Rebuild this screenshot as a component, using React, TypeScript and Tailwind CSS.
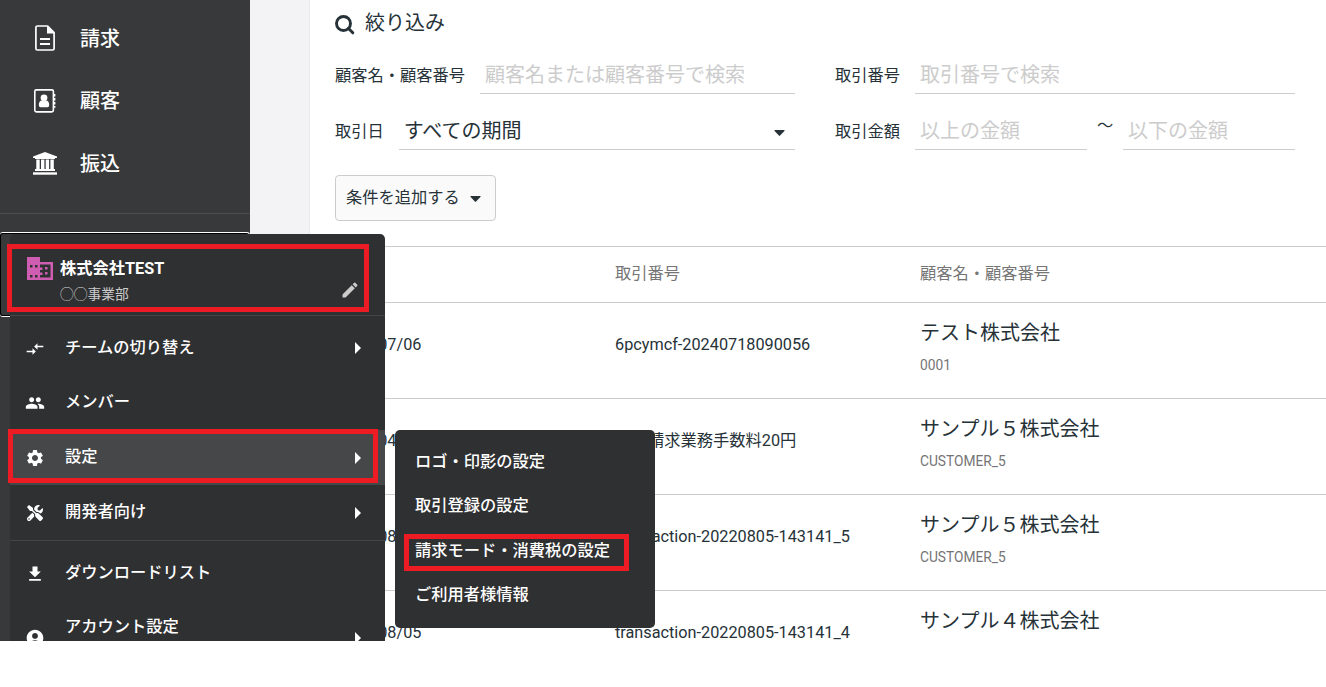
import type { ReactNode } from "react"
import { FaTools } from "react-icons/fa"
import { MdAccountCircle, MdCompareArrows, MdEdit, MdFileDownload, MdPeople, MdSettings } from "react-icons/md"

interface MenuItem {
    label: string
    icon: ReactNode
    hasChildren?: boolean
    active?: boolean
}

interface Transaction {
    date: string
    number: string
    indent?: boolean
    customer: string
    code: string
}

const menuItems: MenuItem[] = [
    { label: "チームの切り替え", icon: <MdCompareArrows className="size-[20px]" />, hasChildren: true },
    { label: "メンバー", icon: <MdPeople className="size-[20px]" /> },
    { label: "設定", icon: <MdSettings className="size-[20px]" />, hasChildren: true, active: true },
    { label: "開発者向け", icon: <FaTools className="size-[16px]" />, hasChildren: true },
]

const submenuItems = ["ロゴ・印影の設定", "取引登録の設定", "請求モード・消費税の設定", "ご利用者様情報"]

const transactions: Transaction[] = [
    { date: "2024/07/06", number: "6pcymcf-20240718090056", customer: "テスト株式会社", code: "0001" },
    { date: "2022/04", number: "請求業務手数料20円", indent: true, customer: "サンプル５株式会社", code: "CUSTOMER_5" },
    { date: "2022/08", number: "transaction-20220805-143141_5", customer: "サンプル５株式会社", code: "CUSTOMER_5" },
    { date: "2022/08/05", number: "transaction-20220805-143141_4", customer: "サンプル４株式会社", code: "" },
]

function DocumentIcon() {
    return (
        <svg viewBox="0 0 20 26" className="h-[26px] w-[20px]" fill="none" stroke="currentColor" strokeWidth="1.7">
            <path d="M12.6 1H2.4Q.9 1 .9 2.5v21q0 1.500 1.500 1.500h15.200q1.500 0 1.500-1.500V7.600Z" strokeLinejoin="round" />
            <path d="M12 1v7.500h7.300Z" fill="currentColor" stroke="none" />
            <path d="M5 13.900h10M5 19h10" strokeWidth="2" />
        </svg>
    )
}

function AddressBookIcon() {
    return (
        <svg viewBox="0 0 22 24" className="h-[24px] w-[22px]" fill="currentColor">
            <rect x=".8" y=".9" width="18.600" height="22" rx="1.600" fill="none" stroke="currentColor" strokeWidth="1.600" />
            <circle cx="10" cy="8.800" r="3.400" />
            <path d="M4.800 16.200q0-4.700 3.200-4.700 2 1.400 4 0 3.200 0 3.200 4.700 0 2-1.800 2H6.600q-1.800 0-1.800-2Z" />
            <path d="M19.400 5h2v2.600h-2zM19.400 9h2v2.600h-2zM19.400 13h2v2.600h-2zM19.400 17h2v1.800h-2z" />
        </svg>
    )
}

function BankIcon() {
    return (
        <svg viewBox="0 0 24 23" className="h-[23px] w-[24px]" fill="currentColor">
            <path d="M12 0 24 4.600V6h-2v1H2V6H0V4.600Z" />
            <path d="M3.300 7.600h3.400V17H8V7.600h3.400V17h1.300V7.600h3.400V17h1.300V7.600h3.400V17H22v2H2v-2h1.300Z" />
            <path d="M0 20.300h24v2.400H0z" />
        </svg>
    )
}

function CompanyIcon() {
    return (
        <svg viewBox="0 0 26 23" className="h-[23px] w-[26px]" fill="#cf5db1">
            <path
                fillRule="evenodd"
                d="M0 0h13v5h13v18H0ZM3 8v2.500h2.500V8ZM8 8v2.500h2.500V8ZM3 18v2.500h2.500V18ZM8 18v2.500h2.500V18ZM13 7.500v3h2.500v2.500H13v2.500h2.500v2.500H13v2.500h10.500v-13Z"
            />
            <path d="M18 10h2.500v2.500H18zM18 15h2.500v2.500H18z" />
        </svg>
    )
}

function SearchIcon() {
    return (
        <svg viewBox="0 0 20 20" className="size-[20px]" fill="none" stroke="currentColor">
            <circle cx="8.500" cy="8.500" r="7" strokeWidth="2.900" />
            <path d="m13.500 13.500 4.300 4.300" strokeWidth="3" strokeLinecap="round" />
        </svg>
    )
}

function CaretDown() {
    return (
        <svg viewBox="0 0 11 6" className="h-[6px] w-[11px]" fill="currentColor">
            <path d="M1 0h9q1 .2.400 1L6.100 5.600q-.600.600-1.200 0L.6 1Q0 .2 1 0Z" />
        </svg>
    )
}

function CaretRight() {
    return (
        <svg viewBox="0 0 6 12" className="h-[12px] w-[6px]" fill="currentColor">
            <path d="M0 0v12l6-6Z" />
        </svg>
    )
}

function NavItem({ icon, label }: { icon: ReactNode; label: string }) {
    return (
        <li className="flex h-[62.5px] items-center pl-[30px] text-[20px] text-white">
            <span className="flex w-[30px] justify-center">{icon}</span>
            <span className="pt-px pl-[20px] font-medium">{label}</span>
        </li>
    )
}

function MenuRow({ icon, label, hasChildren, active }: MenuItem) {
    return (
        <li className={`flex h-[54.8px] items-center pr-[24px] pl-[10px] ${active ? "bg-[#464749]" : ""}`}>
            <span className="flex w-[30px] justify-center pt-px">{icon}</span>
            <span className="flex-1 pb-px pl-[15px]">{label}</span>
            {hasChildren && <CaretRight />}
        </li>
    )
}

function Field({ label, children }: { label: string; children: ReactNode }) {
    return (
        <div className="flex h-[38px] items-center">
            <span className="shrink-0 pt-[2px] pr-[15px]">{label}</span>
            {children}
        </div>
    )
}

function TextField({ placeholder }: { placeholder: string }) {
    return (
        <input
            type="text"
            placeholder={placeholder}
            className="h-[38px] w-0 flex-1 border-b border-[#ccc] px-[5px] pt-px text-[20px] placeholder:text-[#ccc]"
        />
    )
}

function Sidebar() {
    return (
        <aside className="w-[250px] shrink-0 bg-[#38393b]">
            <ul className="h-[213px] pt-[7px]">
                <NavItem icon={<DocumentIcon />} label="請求" />
                <NavItem icon={<AddressBookIcon />} label="顧客" />
                <NavItem icon={<BankIcon />} label="振込" />
            </ul>
            <div className="border-t border-[#4c4d4f] pt-[18px]">
                <div className="h-[85px] rounded-[3px] border border-l-0 border-white">
                    <div className="h-full rounded-[3px] border border-black" />
                </div>
            </div>
        </aside>
    )
}

function AccountMenu() {
    return (
        <div className="absolute top-[234px] left-[10px] h-[407px] w-[375px] overflow-hidden rounded-t-[5px] bg-[#2f3032] font-medium text-white">
            <div className="flex h-[82px] border-b border-[#444547] pl-[17px]">
                <div className="pt-[23px]"><CompanyIcon /></div>
                <div className="flex-1 pt-[23px] pl-[7px]">
                    <p className="leading-[24px] font-bold">株式会社TEST</p>
                    <p className="pt-[3px] text-[13.75px] leading-[20px] font-normal text-[#ccc]">◯◯事業部</p>
                </div>
                <MdEdit className="mt-[46px] mr-[25px] size-[20px] text-[#ccc]" />
            </div>
            <ul className="border-b border-[#444547] pt-[4.8px]">
                {menuItems.map(item => (
                    <MenuRow key={item.label} {...item} />
                ))}
            </ul>
            <ul className="pt-[5px]">
                <MenuRow icon={<MdFileDownload className="size-[20px]" />} label="ダウンロードリスト" />
                <li className="flex h-[74px] items-center pr-[24px] pl-[10px]">
                    <span className="flex w-[30px] justify-center"><MdAccountCircle className="size-[20px]" /></span>
                    <span className="flex-1 self-start pt-[14px] pl-[15px]">アカウント設定</span>
                    <CaretRight />
                </li>
            </ul>
        </div>
    )
}

function SettingsSubmenu() {
    return (
        <ul className="absolute top-[430px] left-[395px] h-[198px] w-[260px] rounded-[5px] bg-[#2f3032] pt-[10px] font-medium text-white">
            {submenuItems.map(label => (
                <li key={label} className="flex h-[44.4px] items-center px-[20px]">{label}</li>
            ))}
        </ul>
    )
}

function Filters() {
    return (
        <section className="h-[246px] pl-[25px]">
            <h2 className="flex items-center gap-[10px] pt-[8px] text-[20px] leading-[30px]">
                <span className="pt-[3px]"><SearchIcon /></span>
                絞り込み
            </h2>
            <div className="grid w-[960px] grid-cols-[460px_460px] gap-x-[40px] gap-y-[18px] pt-[18px]">
                <Field label="顧客名・顧客番号"><TextField placeholder="顧客名または顧客番号で検索" /></Field>
                <Field label="取引番号"><TextField placeholder="取引番号で検索" /></Field>
                <Field label="取引日">
                    <div className="flex h-[38px] flex-1 items-center justify-between border-b border-[#ccc] pr-[10px] pl-[5px] text-[20px]">
                        すべての期間
                        <span className="pt-[4px]"><CaretDown /></span>
                    </div>
                </Field>
                <Field label="取引金額">
                    <TextField placeholder="以上の金額" />
                    <span className="w-[36px] pb-[10px] text-center">〜</span>
                    <TextField placeholder="以下の金額" />
                </Field>
            </div>
            <button className="mt-[25px] flex h-[46px] w-[161px] items-center gap-[10px] rounded-[4px] border border-[#ccc] bg-[#fafafa] pl-[10px]">
                <span>条件を追加する</span>
                <span className="pt-px"><CaretDown /></span>
            </button>
        </section>
    )
}

function TransactionTable() {
    return (
        <section>
            <div className="grid h-[57px] grid-cols-[280px_305px_1fr] items-center border-y border-[#ccc] pb-px pl-[25px] text-[#757575]">
                <span />
                <span>取引番号</span>
                <span>顧客名・顧客番号</span>
            </div>
            {transactions.map((row, i) => (
                <div key={i} className="grid h-[96px] grid-cols-[280px_305px_1fr] items-center border-b border-[#ccc] pb-[10px] pl-[25px]">
                    <span>{row.date}</span>
                    <span className={row.indent ? "pl-[33px]" : ""}>{row.number}</span>
                    <div className="h-[68px]">
                        <p className="pt-[6px] text-[20px] leading-[30px]">{row.customer}</p>
                        <p className="pt-[7px] text-[13.75px] leading-[20px] text-[#757575]">{row.code}</p>
                    </div>
                </div>
            ))}
        </section>
    )
}

export default function App() {
    return (
        <div className="h-[687px] overflow-hidden bg-white font-['Roboto','Noto_Sans_CJK_JP',sans-serif] text-[16.25px] text-[#263238]">
            <div className="relative flex h-[641px] overflow-hidden bg-[#f3f3f6]">
                <Sidebar />
                <main className="ml-[59px] flex-1 border-l border-[#e8e8ea] bg-white">
                    <Filters />
                    <TransactionTable />
                </main>
                <AccountMenu />
                <SettingsSubmenu />

                {/* highlight frames */}
                <div className="absolute top-[244px] left-[7px] h-[68px] w-[362px] border-5 border-[#ed1c24]" />
                <div className="absolute top-[429px] left-[8px] h-[54px] w-[370px] border-5 border-[#ed1c24]" />
                <div className="absolute top-[534px] left-[404px] h-[37px] w-[225px] border-5 border-[#ed1c24]" />
            </div>
        </div>
    )
}
